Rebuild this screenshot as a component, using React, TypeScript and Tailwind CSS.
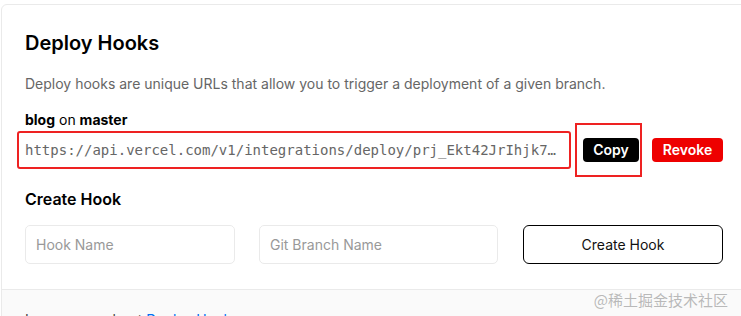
export default function App() {
  const url =
    "https://api.vercel.com/v1/integrations/deploy/prj_Ekt42JrIhjk7xYq2ZgA9mPpQnLs4/8bWz3KdTfe";

  return (
    <div
      className="relative h-[316px] w-[741px] overflow-hidden bg-white pl-px pt-1"
      style={{ fontFamily: "Inter, 'Noto Sans', sans-serif" }}
    >
      <div className="w-[780px] overflow-hidden rounded-md border border-[#eaeaea] bg-white">
        <div className="pl-[23px] pr-6 pt-6 pb-[25px]">
          <h2 className="text-[20px] font-semibold leading-7 text-black">Deploy Hooks</h2>
          <p className="mt-[17px] text-sm leading-5 text-[#666]">
            Deploy hooks are unique URLs that allow you to trigger a deployment of a given branch.
          </p>

          <div className="mt-4 text-sm leading-5 text-black">
            <span className="font-bold">blog</span> on <span className="font-bold">master</span>
          </div>

          <div className="-ml-2 mt-px flex items-center">
            <div className="flex h-[38px] w-[554px] items-center rounded-[3px] border-2 border-[#e22] pl-[6px] pr-[12px]">
              <span
                className="truncate text-sm text-[#666]"
                style={{ fontFamily: "'DejaVu Sans Mono', 'Liberation Mono', monospace" }}
              >
                {url}
              </span>
            </div>
            <div className="-my-2 ml-1 flex h-[54px] w-[67px] items-center border-2 border-[#e22] pl-[6px]">
              <button className="h-6 w-14 rounded bg-black text-sm font-semibold text-white">Copy</button>
            </div>
            <button className="ml-[10px] h-6 w-[71px] rounded bg-[#e00] text-sm font-semibold text-white">
              Revoke
            </button>
          </div>

          <h3 className="mt-[18px] text-base font-semibold leading-6 text-black">Create Hook</h3>

          <div className="mt-[14px] flex items-center">
            <input
              placeholder="Hook Name"
              className="h-[39px] w-[210px] rounded-[5px] border border-[#eaeaea] px-[10px] text-sm placeholder:text-[#999] focus:outline-none"
            />
            <input
              placeholder="Git Branch Name"
              className="ml-6 h-[39px] w-[239px] rounded-[5px] border border-[#eaeaea] px-[10px] text-sm placeholder:text-[#999] focus:outline-none"
            />
            <button className="ml-[25px] h-[39px] w-[200px] rounded-md border border-black text-sm text-[#111]">
              Create Hook
            </button>
          </div>
        </div>

        <div className="border-t border-[#eaeaea] bg-[#fafafa] pl-[23px] pr-6 pt-5 pb-5 text-sm leading-5 text-[#444]">
          Learn more about <span className="text-[#0070f3]">Deploy Hooks</span> →
        </div>
      </div>

      <div
        className="absolute right-[13px] top-[290px] text-[15px] leading-5 text-[#a8a8a8]/80"
        style={{ fontFamily: "'Noto Sans CJK SC', 'Noto Sans', sans-serif" }}
      >
        @稀土掘金技术社区
      </div>
    </div>
  );
}
